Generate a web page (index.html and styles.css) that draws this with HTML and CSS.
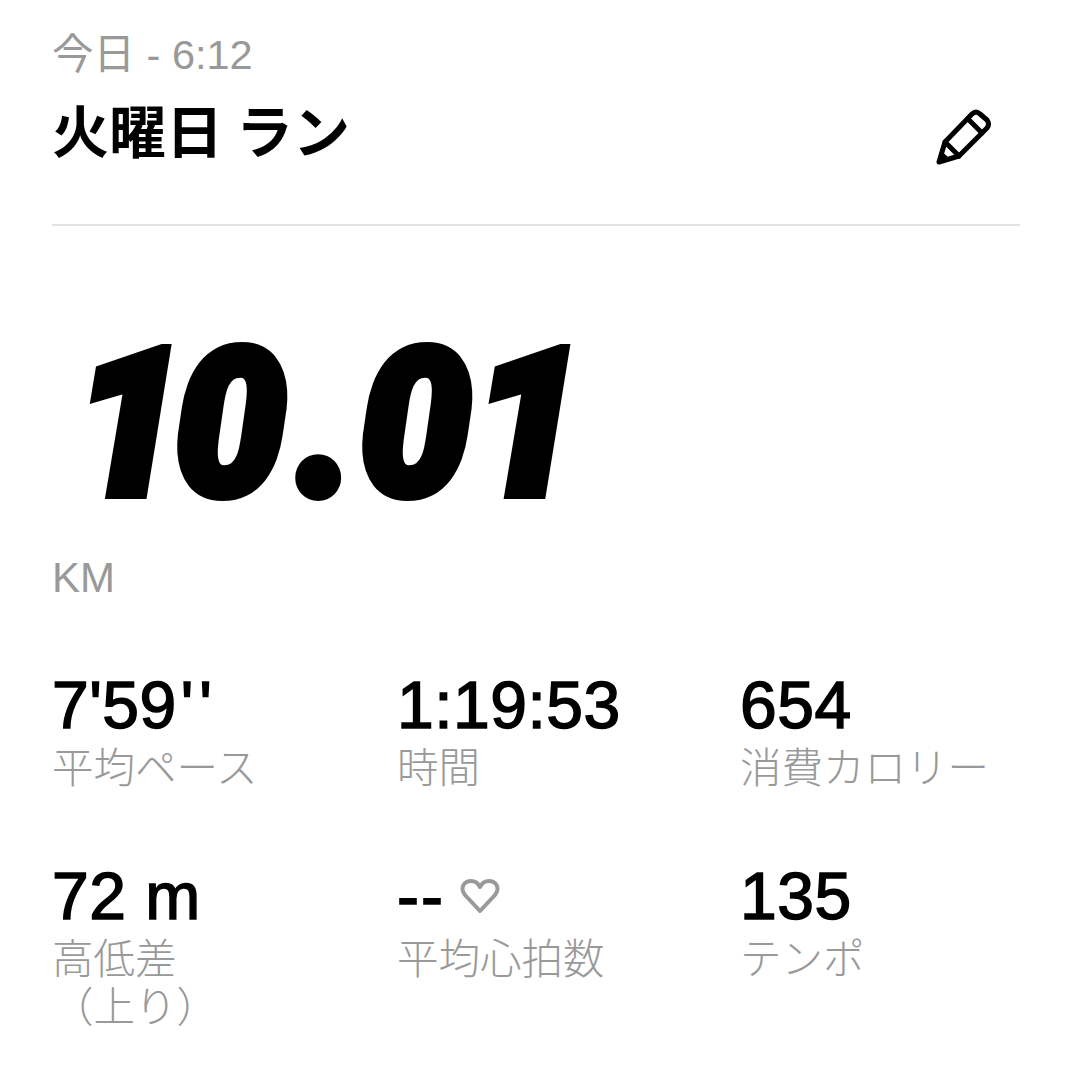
FILE: index.html
```html
<!doctype html>
<html lang="ja">
<head>
    <meta charset="UTF-8">
    <title>火曜日 ラン</title>
    <link rel="stylesheet" href="styles.css">
</head>
<body>
<header class="head">
    <p class="when">今日 - 6:12</p>
    <div class="title-row">
        <h1 class="title">火曜日 ラン</h1>
        <svg class="pencil" viewBox="0 0 56 56" width="56" height="56" fill="none" stroke="#000" stroke-width="5" stroke-linejoin="round" stroke-linecap="round">
            <path d="M3 53 L9 33 L36 5 Q40 1 44 5 L51 11 Q54 15 51 19 L23 47 Z"/>
            <path d="M9 33 L23 47"/>
            <path d="M32 10 L46 24"/>
            <path d="M3 53 L12 50 L5 44 Z" fill="#000" stroke-width="3"/>
        </svg>
    </div>
</header>

<section class="distance">
    <div class="big"><span class="one">1</span>0<span class="dot">.</span>01</div>
    <div class="unit">KM</div>
</section>

<section class="stats">
    <div class="stat">
        <div class="value">7'59<span class="primes">''</span></div>
        <div class="label">平均ペース</div>
    </div>
    <div class="stat">
        <div class="value">1:19:53</div>
        <div class="label">時間</div>
    </div>
    <div class="stat">
        <div class="value">654</div>
        <div class="label">消費カロリー</div>
    </div>
    <div class="stat">
        <div class="value">72 m</div>
        <div class="label">高低差<br>（上り）</div>
    </div>
    <div class="stat">
        <div class="value"><span class="dashes">--</span><svg class="heart" viewBox="0 0 40 36" width="40" height="36" fill="none" stroke="#999" stroke-width="4" stroke-linejoin="round"><path d="M20 33 L5 17 C-1 9 5 3 11 3 C15 3 18 5 20 9 C22 5 25 3 29 3 C35 3 41 9 35 17 Z"/></svg></div>
        <div class="label">平均心拍数</div>
    </div>
    <div class="stat">
        <div class="value">135</div>
        <div class="label">テンポ</div>
    </div>
</section>
</body>
</html>
```

FILE: styles.css
```css
html, body {
    margin: 0;
    background: #fff;
}
body {
    width: 1070px;
    height: 1080px;
    overflow: hidden;
    padding: 0 50px 0 52px;
    box-sizing: border-box;
    font-family: "Liberation Sans", "Noto Sans CJK JP", sans-serif;
    color: #000;
}
.head {
    padding-top: 30px;
    height: 194px;
    border-bottom: 2px solid #e2e2e2;
}
.when {
    margin: 0;
    font-size: 41.5px;
    line-height: 50px;
    color: #999;
}
.title-row {
    display: flex;
    justify-content: space-between;
    align-items: flex-start;
    padding-right: 28px;
    margin-top: 10px;
}
.title {
    margin: 0;
    font-size: 57px;
    line-height: 76px;
    font-weight: 700;
    font-family: "Noto Sans CJK JP", sans-serif;
}
.pencil {
    margin-top: 19px;
}
.distance {
    padding-top: 93px;
}
.big {
    height: 212px;
    font-size: 204px;
    line-height: 212px;
    font-weight: 900;
    font-style: italic;
    font-family: Roboto, sans-serif;
    -webkit-text-stroke: 10px #000;
    letter-spacing: 2px;
    transform: scaleX(0.97);
    transform-origin: left center;
    margin-left: 22px;
    white-space: nowrap;
}
.one {
    letter-spacing: -11px;
}
.dot {
    font-family: Lato, sans-serif;
    font-size: 230px;
    line-height: 0;
    margin: 0 7px 0 10px;
}
.unit {
    margin-top: 22px;
    font-size: 42px;
    line-height: 50px;
    color: #999;
}
.stats {
    display: grid;
    grid-template-columns: 345px 343px 1fr;
    margin-top: 67px;
    grid-auto-rows: 191px;
}
.value {
    font-size: 66px;
    line-height: 70px;
    -webkit-text-stroke: 1.5px #000;
    letter-spacing: 0.5px;
    font-kerning: none;
    display: flex;
    align-items: center;
    white-space: pre;
}
.primes {
    letter-spacing: 6px;
    margin-left: 4px;
}
.dashes {
    letter-spacing: 2px;
    margin-right: 15px;
}
.label {
    margin-top: 1px;
    font-size: 41.5px;
    line-height: 48px;
    color: #999;
    font-family: "Noto Sans CJK JP", sans-serif;
    font-weight: 300;
}
```
